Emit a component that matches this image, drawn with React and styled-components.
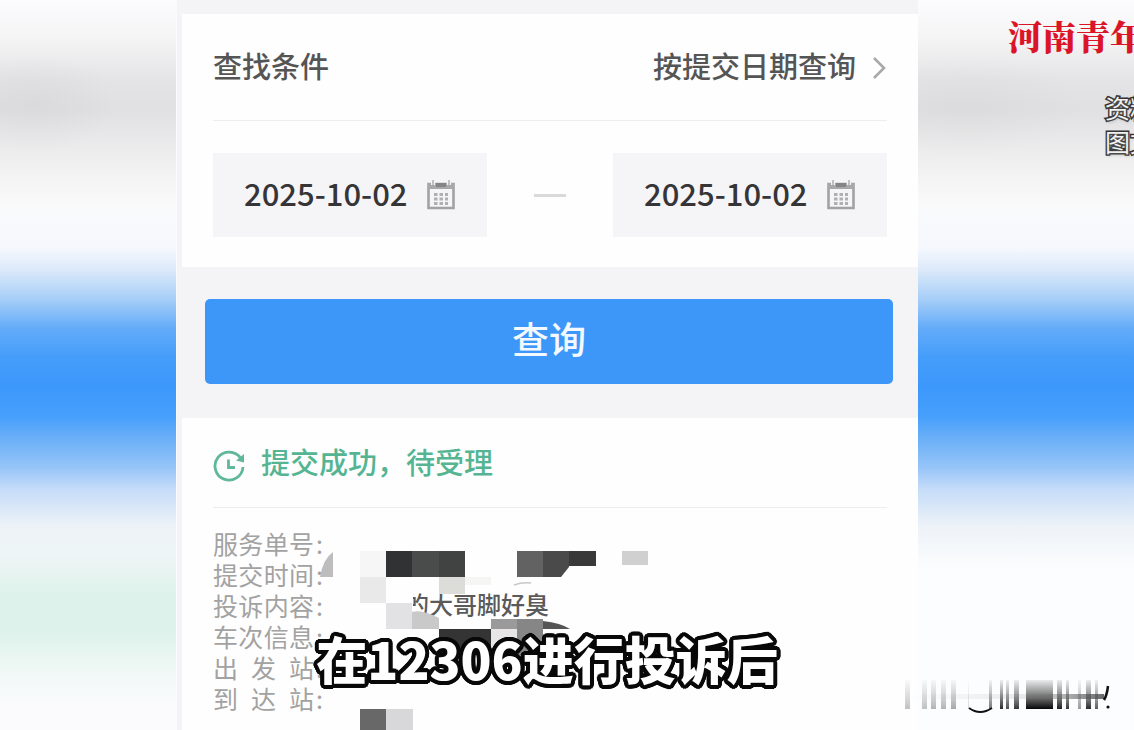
import React from 'react';
import styled, { createGlobalStyle } from 'styled-components';

const sans = '"Noto Sans CJK SC", "Noto Sans", sans-serif';

const GlobalStyle = createGlobalStyle`
  *, *::before, *::after { box-sizing: border-box; }
  body { margin: 0; background: #fdfdfe; font-family: ${sans}; color: #444; }
  button, input { font-family: inherit; }
`;

const Page = styled.div`
  position: relative;
  display: grid;
  grid-template-columns: minmax(0, 176fr) minmax(0, 742fr) minmax(0, 216fr);
  min-height: 100vh;
  overflow: hidden;
`;

const Side = styled.aside`
  overflow: hidden;
  background:
    ${(p) => p.$glow},
    linear-gradient(
      to bottom,
      #fcfcfe 0, #f5f5f6 5%, #e4e4e6 11%, #e0e0e2 15%, #efeff0 22%, #fafafb 28%,
      #f5f8fd 34%, #dbe9fa 37%, #a6cef8 41%, #63abf9 45%, #449dfa 49%, #3c98fb 53%,
      #469ffb 57%, #6aaff8 60%, #95c4f8 64%, #c5dcf8 67%, #edf2f8 72%, ${(p) => p.$tail}
    );
`;

const Panel = styled.main`
  display: flex;
  flex-direction: column;
  padding: 14px 0 0 5px;
  background: #f4f4f7;
  border-left: 1px solid #fafafc;
`;

const Card = styled.section`
  position: relative;
  flex: ${(p) => (p.$grow ? 1 : 'none')};
  padding: 0 31px 0 31px;
  background: #fefefe;
`;

const Row = styled.div`
  display: flex;
  align-items: center;
  justify-content: ${(p) => (p.$between ? 'space-between' : 'flex-start')};
  gap: 16px;
  height: ${(p) => p.$height}px;
  border-bottom: 1px solid #ededee;
`;

const Title = styled.h2`
  margin: 0;
  padding-bottom: 4px;
  font-size: 29px;
  line-height: 40px;
  font-weight: 500;
  color: ${(p) => p.$color || '#555'};
`;

const Picker = styled.button`
  display: flex;
  align-items: center;
  gap: 16px;
  padding: 0;
  border: 0;
  background: none;
  color: #555;
  font-size: 29px;
  font-weight: 500;
  line-height: 40px;
  white-space: nowrap;
`;

const PickerText = styled.span`
  padding-bottom: 4px;
`;

const Range = styled.div`
  display: flex;
  align-items: center;
  justify-content: space-between;
  padding: 32px 0 30px;
`;

const Field = styled.label`
  display: flex;
  align-items: center;
  gap: 14px;
  width: 274px;
  height: 84px;
  padding: 0 32px 0 31px;
  background: #f5f4f7;
`;

const DateInput = styled.input`
  flex: 1;
  min-width: 0;
  height: 44px;
  padding: 0 0 6px;
  border: 0;
  background: none;
  color: #353537;
  font-size: 31px;
  font-weight: 500;
  outline: none;
`;

const Dash = styled.span`
  width: 32px;
  height: 3px;
  background: #d9d9da;
`;

const Search = styled.button`
  height: 85px;
  margin: 32px 25px 34px 23px;
  padding: 0 0 7px;
  border: 0;
  border-radius: 5px;
  background: #3c97f9;
  color: #f4f9ff;
  font-size: 37px;
  font-weight: 500;
`;

const Details = styled.dl`
  margin: 0;
  padding: 20px 0 14px;
`;

const Detail = styled.div`
  display: flex;
  height: 31px;
  line-height: 31px;
`;

const Term = styled.dt`
  display: flex;
  width: 200px;
  color: #a2a2a2;
  font-size: 25px;
`;

const Label = styled.span`
  width: 101px;
  text-align: justify;
  text-align-last: justify;
  white-space: nowrap;

  & + span { margin-left: 2px; }
`;

const Value = styled.dd`
  margin: 0 0 0 -8px;
  color: #5a5a5a;
  font-size: 24px;
  font-weight: 500;
  line-height: 28px;
  white-space: nowrap;
`;

const Mosaic = styled.svg`
  position: absolute;
  left: 136px;
  top: 128px;
`;

const outline = Array.from({ length: 24 }, (_, i) => {
  const angle = (i * Math.PI) / 12;
  return `${(Math.cos(angle) * 4).toFixed(2)}px ${(Math.sin(angle) * 4).toFixed(2)}px 0 #090909`;
}).join(', ');

const Caption = styled.p`
  position: absolute;
  left: 0;
  right: 40px;
  bottom: 37px;
  margin: 0;
  text-align: center;
  font-size: 51px;
  line-height: 70px;
  font-weight: 900;
  color: #fff;
  text-shadow: ${outline};
`;

const Brand = styled.p`
  margin: 16px 0 0 90px;
  font-family: "Noto Serif CJK SC", "Noto Sans CJK SC", serif;
  font-size: 34px;
  line-height: 40px;
  font-weight: 900;
  color: #dc1428;
  white-space: nowrap;
`;

const Note = styled.p`
  margin: 34px 0 0 187px;
  font-size: 25px;
  line-height: 34px;
  color: #f2f2f2;
  white-space: nowrap;
  -webkit-text-stroke: 3px #333;
  paint-order: stroke fill;
  text-shadow: 1px 2px 3px #8888;
`;

const Barcode = styled.svg`
  position: absolute;
  right: 20px;
  bottom: 14px;
`;

const StatusMark = styled.svg`
  margin-top: 6px;
`;

function Calendar() {
  return (
    <svg width="28" height="30" viewBox="0 0 28 30" fill="none" aria-hidden="true">
      <path d="M1.5 4h25v24h-25z" stroke="#a2a2a4" strokeWidth="2.6" />
      <path d="M1 3h26v6H1z" fill="#a8a8aa" />
      <path d="M6 0v5M22 0v5" stroke="#f5f4f7" strokeWidth="4" />
      <path d="M6 0v5M22 0v5" stroke="#b4b4b6" strokeWidth="1.6" />
      <path d="M9 5h10" stroke="#858587" strokeWidth="4" />
      <path d="M7 14.500h14M7 19h14M7 23.500h14" stroke="#b0b0b2" strokeWidth="3" strokeDasharray="3.500 2" />
    </svg>
  );
}

function DateField({ label, value }) {
  return (
    <Field>
      <DateInput type="text" aria-label={label} defaultValue={value} />
      <Calendar />
    </Field>
  );
}

function StatusIcon() {
  return (
    <StatusMark width="32" height="34" viewBox="0 0 32 34" fill="none" stroke="#5fb899" aria-hidden="true">
      <path d="M27.500 9A14 14 0 1 0 30 18" strokeWidth="2.800" />
      <path d="M31 5v8.500l-8-2z" fill="#5fb899" stroke="none" />
      <path d="M15.500 10.500v8H22" strokeWidth="2.800" />
    </StatusMark>
  );
}

const cells = [
  [42, 5, 26, 26, '#f6f6f6'], [68, 5, 26, 26, '#303233'], [94, 5, 27, 26, '#4a4c4c'], [121, 5, 26, 26, '#414343'],
  [42, 31, 26, 26, '#e9e9e9'], [68, 31, 27, 26, '#fefefe'], [121, 31, 26, 17, '#dcdcd9'], [147, 31, 26, 8, '#f5f5f3'],
  [68, 57, 26, 26, '#e2e2e4'],
  [121, 83, 52, 26, '#343434'], [173, 73, 26, 10, '#9a9a9a'], [199, 73, 26, 36, '#868686'], [173, 83, 26, 26, '#e8e6e6'],
  [42, 163, 26, 21, '#686868'], [68, 163, 27, 21, '#d8d8da'],
  [199, 5, 26, 26, '#626262'], [304, 5, 26, 14, '#d0d0d0'],
];

function Redaction() {
  return (
    <Mosaic width="340" height="184" viewBox="0 0 340 184" aria-hidden="true">
      <path d="M84 44h11v16h6v18H84Z" fill="#fefefe" />
      {cells.map(([x, y, w, h, fill]) => (
        <rect key={`${x}-${y}`} x={x} y={y} width={w} height={h} fill={fill} />
      ))}
      <path d="M15 6v25H2Q5 13 15 6Z" fill="#bdbdbd" />
      <path d="M94 66Q104 63 121 72V83H94Z" fill="#c9c9c9" />
      <path d="M225 5h26v16l-8 10h-18Z" fill="#4a4a4a" />
      <path d="M251 5h27v15h-27Z" fill="#393939" />
      <path d="M225 75Q243 77 252 83H225Z" fill="#555" />
      <path d="M196 39Q204 36 213 37" stroke="#c8c8c8" strokeWidth="1.500" fill="none" />
    </Mosaic>
  );
}

const bars = [
  [3, 5, 0.25], [20, 5, 0.25], [29, 5, 0.3], [39, 5, 0.3], [49, 5, 0.35], [66, 1, 0.15],
  [87, 3, 0.55], [98, 3, 0.85], [104, 3, 0.7], [112, 5, 0.8], [124, 27, 1],
  [155, 5, 0.9], [164, 3, 0.8], [176, 3, 0.4], [184, 5, 0.85], [193, 3, 0.65],
];

function ChannelMark() {
  return (
    <Barcode width="212" height="40" viewBox="0 0 212 40" aria-hidden="true">
      <defs>
        <linearGradient id="bar" x1="0" y1="0" x2="0" y2="1">
          <stop offset="0" stopColor="#222" stopOpacity="0.08" />
          <stop offset="0.6" stopColor="#222" stopOpacity="0.65" />
          <stop offset="1" stopColor="#050505" />
        </linearGradient>
        <linearGradient id="beam" x1="0" y1="0" x2="1" y2="0">
          <stop offset="0" stopColor="#777" stopOpacity="0" />
          <stop offset="0.6" stopColor="#777" stopOpacity="0.15" />
          <stop offset="1" stopColor="#444" stopOpacity="0.8" />
        </linearGradient>
      </defs>
      {bars.map(([x, w, opacity]) => (
        <rect key={x} x={x} y="4" width={w} height="29" fill="url(#bar)" opacity={opacity} />
      ))}
      <rect x="10" y="18" width="192" height="5" fill="url(#beam)" />
      <path d="M67 32Q78 40 90 32" stroke="#111" strokeWidth="2" fill="none" />
      <path d="M206 10Q205 19 202 24" stroke="#111" strokeWidth="2.500" fill="none" />
      <circle cx="206" cy="31" r="1.600" fill="#111" />
    </Barcode>
  );
}

const details = [
  ['服务单号'],
  ['提交时间'],
  ['投诉内容', '的大哥脚好臭'],
  ['车次信息'],
  ['出 发 站'],
  ['到 达 站'],
];

export default function App() {
  return (
    <>
      <GlobalStyle />
      <Page>
        <Side
          $glow="radial-gradient(ellipse 80px 50px at 35px 102px, #c8c8c844, #c8c8c800)"
          $tail="#eef5f5 76%, #dcf2ea 82%, #dcf2ea 86%, #f0f8f6 92%, #fbfbfd 97%"
        />
        <Panel>
          <Card>
            <Row $between $height={107}>
              <Title>查找条件</Title>
              <Picker type="button">
                <PickerText>按提交日期查询</PickerText>
                <svg width="15" height="24" viewBox="0 0 15 24" fill="none" aria-hidden="true">
                  <path d="M2 3l10 10L2 23" stroke="#a9a9a9" strokeWidth="2.600" />
                </svg>
              </Picker>
            </Row>
            <Range>
              <DateField label="开始日期" value="2025-10-02" />
              <Dash />
              <DateField label="结束日期" value="2025-10-02" />
            </Range>
          </Card>
          <Search type="button">查询</Search>
          <Card $grow>
            <Row $height={90}>
              <StatusIcon />
              <Title $color="#55b592">提交成功，待受理</Title>
            </Row>
            <Details>
              {details.map(([label, value]) => (
                <Detail key={label}>
                  <Term><Label>{label}</Label><span>:</span></Term>
                  {value && <Value>{value}</Value>}
                </Detail>
              ))}
            </Details>
            <Redaction />
          </Card>
        </Panel>
        <Side
          $glow="radial-gradient(ellipse 110px 50px at 50px 105px, #c8c8c833, #c8c8c800)"
          $tail="#fcfdfe 78%"
        >
          <Brand>河南青年</Brand>
          <Note>资料<br />图文</Note>
        </Side>
        <Caption>在12306进行投诉后</Caption>
        <ChannelMark />
      </Page>
    </>
  );
}
